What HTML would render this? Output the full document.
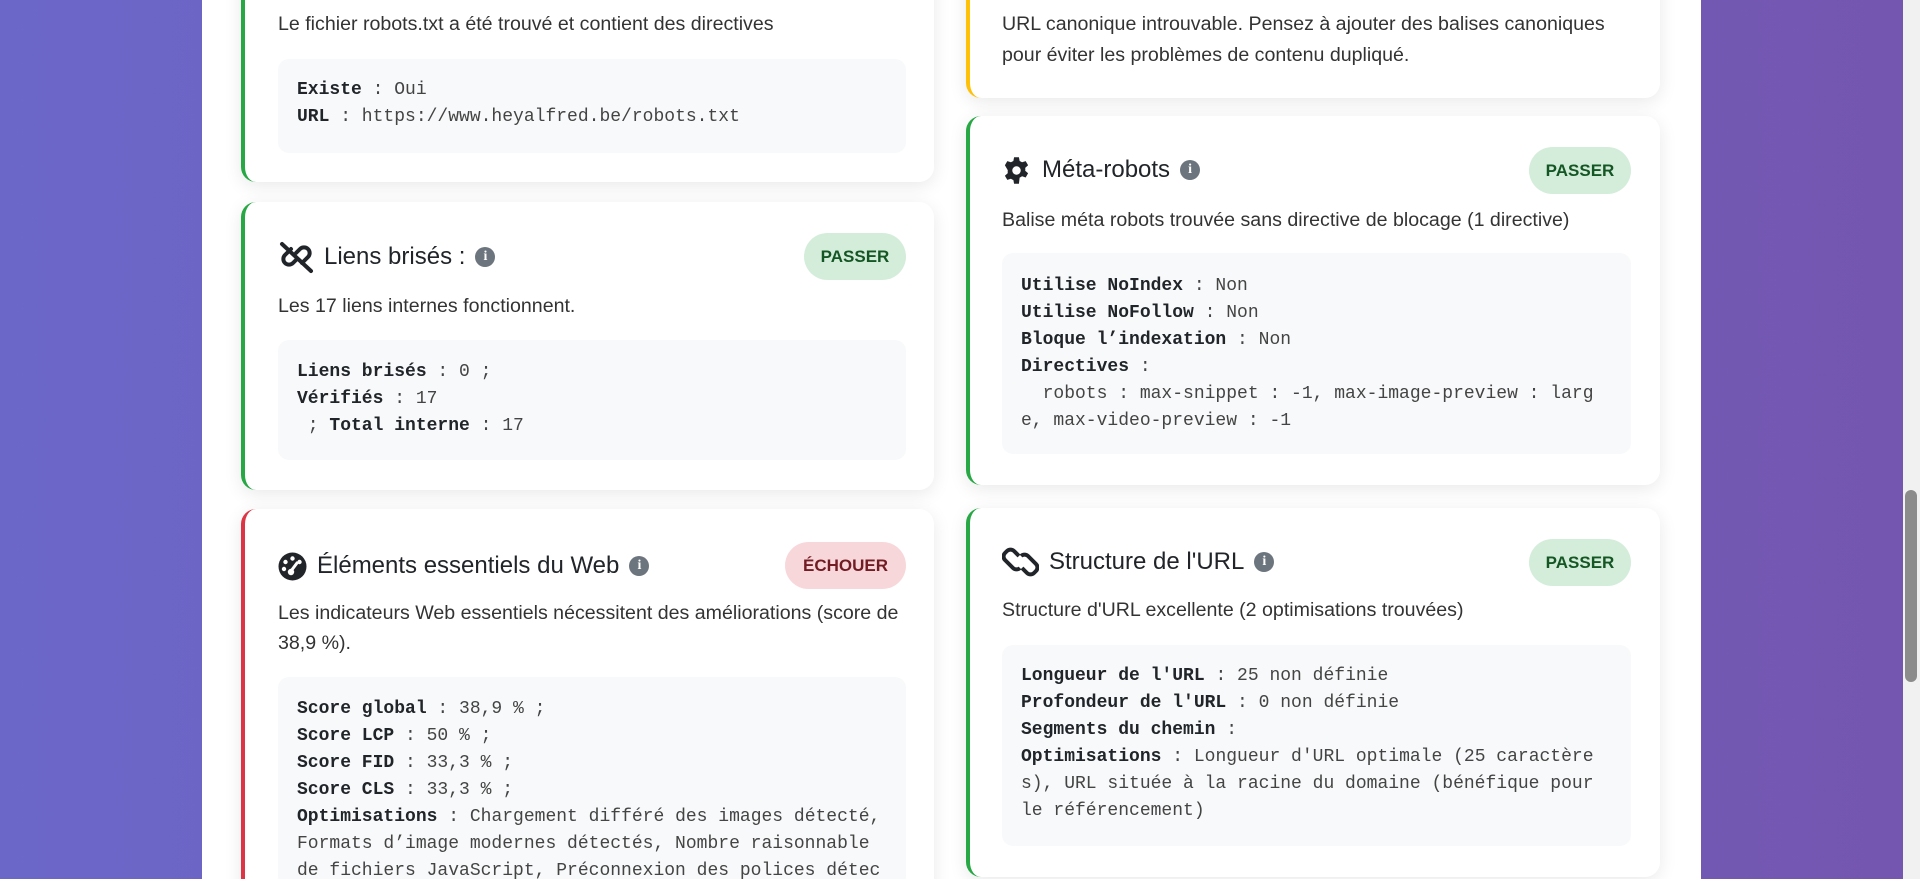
<!DOCTYPE html>
<html><head><meta charset="utf-8"><style>
*{margin:0;padding:0;box-sizing:border-box}
html,body{width:1920px;height:879px;overflow:hidden}
body{background:linear-gradient(to right,#6b67c9,#7456b0);font-family:"Liberation Sans",Arial,sans-serif;color:#212529;position:relative}
.wrap{position:absolute;left:202px;top:0;width:1499px;height:879px;background:#fff}
.sb{position:absolute;left:1903px;top:0;width:17px;height:879px;background:#f1f1f1}
.thumb{position:absolute;left:1905px;top:490px;width:12px;height:192px;background:#8c8c8c;border-radius:6px}
.card{position:absolute;background:#fff;border-radius:15px;border-left:4px solid #28a745;box-shadow:0 4px 18px rgba(0,0,0,.09)}
.red{border-left-color:#dc3545}.yel{border-left-color:#ffc107}
.t{position:absolute;font-size:19.6px;color:#333;white-space:nowrap;line-height:30px}
.h{position:absolute;font-size:24px;color:#212529;white-space:nowrap;line-height:30px;display:flex;align-items:center}
.info{display:inline-block;width:20px;height:20px;border-radius:50%;background:#6c757d;color:#fff;font:bold 14px/20px "Liberation Serif",serif;text-align:center;margin-left:10px}
.badge{position:absolute;height:47px;border-radius:24px;font-weight:bold;font-size:17px;line-height:47px;text-align:center}
.pass{background:#d4edda;color:#155724;width:102px}
.fail{background:#f8d7da;color:#721c24;width:121px}
.code{position:absolute;background:#f8f9fa;border-radius:11px;padding:19px 0 0 19px;font-family:"Liberation Mono",monospace;font-size:18px;line-height:27px;white-space:pre;color:#444}
.code b{color:#212529}
.ic{position:absolute}
</style></head><body>
<div class="wrap"></div>
<div class="sb"></div><div class="thumb"></div>

<div class="card" style="left:241px;top:-50px;width:693px;height:232px"></div>
<div class="t" style="left:278px;top:9px">Le fichier robots.txt a été trouvé et contient des directives</div>
<div class="code" style="left:278px;top:59px;width:628px;height:94px;padding-top:18px"><b>Existe</b> : Oui
<b>URL</b> : https://www.heyalfred.be/robots.txt</div>

<div class="card" style="left:241px;top:202px;width:693px;height:288px"></div>
<svg class="ic" style="left:278px;top:240px" width="37" height="34" viewBox="0 0 37 34"><g fill="none" stroke="#212529" stroke-width="4" stroke-linecap="round"><path d="M13 9 L7 15 a5.5 5.5 0 0 0 8 8 l4-4"/><path d="M24 23 l6-6 a5.5 5.5 0 0 0-8-8 l-4 4"/><path d="M4 4 L33 31"/></g></svg>
<div class="h" style="left:324px;top:242px">Liens brisés :<span class="info">i</span></div>
<div class="badge pass" style="left:804px;top:233px">PASSER</div>
<div class="t" style="left:278px;top:291px">Les 17 liens internes fonctionnent.</div>
<div class="code" style="left:278px;top:340px;width:628px;height:120px"><b>Liens brisés</b> : 0 ;
<b>Vérifiés</b> : 17
 ; <b>Total interne</b> : 17</div>

<div class="card red" style="left:241px;top:509px;width:693px;height:420px"></div>
<svg class="ic" style="left:278px;top:552px" width="29" height="29" viewBox="0 0 29 29"><circle cx="14.5" cy="14.5" r="14" fill="#212529"/><circle cx="14.5" cy="6.5" r="2.2" fill="#fff"/><circle cx="7.5" cy="10" r="2.2" fill="#fff"/><circle cx="21.5" cy="10" r="2.2" fill="#fff"/><circle cx="6" cy="17" r="2.2" fill="#fff"/><path d="M13 19 L19 11" stroke="#fff" stroke-width="3" stroke-linecap="round"/><circle cx="13" cy="20" r="3.2" fill="#fff"/></svg>
<div class="h" style="left:317px;top:551px">Éléments essentiels du Web<span class="info">i</span></div>
<div class="badge fail" style="left:785px;top:542px">ÉCHOUER</div>
<div class="t" style="left:278px;top:598px">Les indicateurs Web essentiels nécessitent des améliorations (score de</div>
<div class="t" style="left:278px;top:628px">38,9 %).</div>
<div class="code" style="left:278px;top:677px;width:628px;height:260px"><b>Score global</b> : 38,9 % ;
<b>Score LCP</b> : 50 % ;
<b>Score FID</b> : 33,3 % ;
<b>Score CLS</b> : 33,3 % ;
<b>Optimisations</b> : Chargement différé des images détecté,
Formats d’image modernes détectés, Nombre raisonnable
de fichiers JavaScript, Préconnexion des polices détec</div>

<div class="card yel" style="left:966px;top:-50px;width:694px;height:148px"></div>
<div class="t" style="left:1002px;top:9px">URL canonique introuvable. Pensez à ajouter des balises canoniques</div>
<div class="t" style="left:1002px;top:40px">pour éviter les problèmes de contenu dupliqué.</div>

<div class="card" style="left:966px;top:116px;width:694px;height:369px"></div>
<svg class="ic" style="left:1002px;top:156px" width="29" height="29" viewBox="0 0 24 24"><path fill="#212529" fill-rule="evenodd" d="M10 1h4l.6 3.1a8 8 0 0 1 2 1.1l3-1 2 3.5-2.4 2.1a8 8 0 0 1 0 2.4l2.4 2.1-2 3.5-3-1a8 8 0 0 1-2 1.1L14 23h-4l-.6-3.1a8 8 0 0 1-2-1.1l-3 1-2-3.5 2.4-2.1a8 8 0 0 1 0-2.4L2.4 7.7l2-3.5 3 1a8 8 0 0 1 2-1.1zM12 8.5a3.5 3.5 0 1 0 0 7 3.5 3.5 0 0 0 0-7z"/></svg>
<div class="h" style="left:1042px;top:155px">Méta-robots<span class="info">i</span></div>
<div class="badge pass" style="left:1529px;top:147px">PASSER</div>
<div class="t" style="left:1002px;top:205px">Balise méta robots trouvée sans directive de blocage (1 directive)</div>
<div class="code" style="left:1002px;top:253px;width:629px;height:201px;padding-top:20px"><b>Utilise NoIndex</b> : Non
<b>Utilise NoFollow</b> : Non
<b>Bloque l’indexation</b> : Non
<b>Directives</b> :
  robots : max-snippet : -1, max-image-preview : larg
e, max-video-preview : -1</div>

<div class="card" style="left:966px;top:508px;width:694px;height:369px"></div>
<svg class="ic" style="left:1002px;top:547px" width="37" height="30" viewBox="0 0 37 30"><g fill="none" stroke="#212529" stroke-width="4"><path d="M17 9 L12 4 a5 5 0 0 0-7 0 l-2 2 a5 5 0 0 0 0 7 l8 8 a5 5 0 0 0 7 0"/><path d="M20 21 l5 5 a5 5 0 0 0 7 0 l2-2 a5 5 0 0 0 0-7 l-8-8 a5 5 0 0 0-7 0"/></g></svg>
<div class="h" style="left:1049px;top:547px">Structure de l'URL<span class="info">i</span></div>
<div class="badge pass" style="left:1529px;top:539px">PASSER</div>
<div class="t" style="left:1002px;top:595px">Structure d'URL excellente (2 optimisations trouvées)</div>
<div class="code" style="left:1002px;top:645px;width:629px;height:201px;padding-top:18px"><b>Longueur de l'URL</b> : 25 non définie
<b>Profondeur de l'URL</b> : 0 non définie
<b>Segments du chemin</b> :
<b>Optimisations</b> : Longueur d'URL optimale (25 caractère
s), URL située à la racine du domaine (bénéfique pour
le référencement)</div>
</body></html>
